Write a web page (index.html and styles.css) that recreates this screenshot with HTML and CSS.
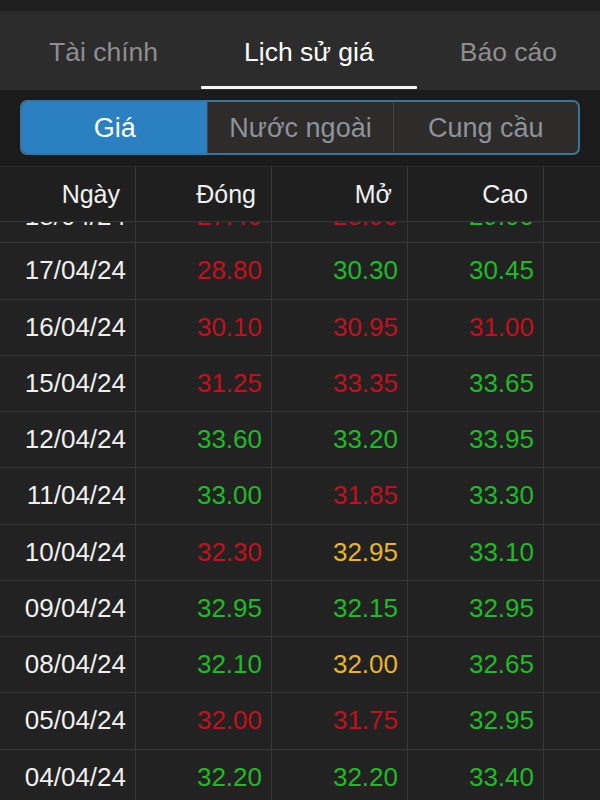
FILE: index.html
```html
<!DOCTYPE html>
<html lang="vi">
<head>
<meta charset="utf-8">
<title>Lịch sử giá</title>
<link rel="stylesheet" href="styles.css">
</head>
<body>
<div class="topstrip"></div>
<nav class="tabs">
  <div class="tab">Tài chính</div>
  <div class="tab active">Lịch sử giá</div>
  <div class="tab">Báo cáo</div>
</nav>
<div class="segwrap">
  <div class="seg">
    <div class="seg-item active">Giá</div>
    <div class="seg-item">Nước ngoài</div>
    <div class="seg-item">Cung cầu</div>
  </div>
</div>
<div class="table">
  <div class="row head">
    <div class="cell">Ngày</div>
    <div class="cell">Đóng</div>
    <div class="cell">Mở</div>
    <div class="cell">Cao</div>
    <div class="cell last"></div>
  </div>
  <div class="body">
    <div class="row partial">
      <div class="cell">18/04/24</div>
      <div class="cell red">27.40</div>
      <div class="cell red">28.90</div>
      <div class="cell green">29.00</div>
      <div class="cell last"></div>
    </div>
    <div class="row"><div class="cell">17/04/24</div><div class="cell red">28.80</div><div class="cell green">30.30</div><div class="cell green">30.45</div><div class="cell last"></div></div>
    <div class="row"><div class="cell">16/04/24</div><div class="cell red">30.10</div><div class="cell red">30.95</div><div class="cell red">31.00</div><div class="cell last"></div></div>
    <div class="row"><div class="cell">15/04/24</div><div class="cell red">31.25</div><div class="cell red">33.35</div><div class="cell green">33.65</div><div class="cell last"></div></div>
    <div class="row"><div class="cell">12/04/24</div><div class="cell green">33.60</div><div class="cell green">33.20</div><div class="cell green">33.95</div><div class="cell last"></div></div>
    <div class="row"><div class="cell">11/04/24</div><div class="cell green">33.00</div><div class="cell red">31.85</div><div class="cell green">33.30</div><div class="cell last"></div></div>
    <div class="row"><div class="cell">10/04/24</div><div class="cell red">32.30</div><div class="cell yellow">32.95</div><div class="cell green">33.10</div><div class="cell last"></div></div>
    <div class="row"><div class="cell">09/04/24</div><div class="cell green">32.95</div><div class="cell green">32.15</div><div class="cell green">32.95</div><div class="cell last"></div></div>
    <div class="row"><div class="cell">08/04/24</div><div class="cell green">32.10</div><div class="cell yellow">32.00</div><div class="cell green">32.65</div><div class="cell last"></div></div>
    <div class="row"><div class="cell">05/04/24</div><div class="cell red">32.00</div><div class="cell red">31.75</div><div class="cell green">32.95</div><div class="cell last"></div></div>
    <div class="row"><div class="cell">04/04/24</div><div class="cell green">32.20</div><div class="cell green">32.20</div><div class="cell green">33.40</div><div class="cell last"></div></div>
  </div>
</div>
</body>
</html>
```
FILE: styles.css
```css
html, body {
  margin: 0;
  padding: 0;
}
body {
  width: 600px;
  height: 800px;
  overflow: hidden;
  background: #1b1b1b;
  font-family: "Liberation Sans", Arial, sans-serif;
  color: #f2f2f2;
}
.topstrip {
  height: 11px;
  background: #1f1f1f;
}
.tabs {
  height: 79px;
  background: #2c2c2c;
  display: flex;
  padding-left: 6px;
}
.tab {
  position: relative;
  display: flex;
  align-items: center;
  padding: 4px 43px 0;
  font-size: 26.5px;
  color: #8e8e8e;
  white-space: nowrap;
}
.tab.active {
  color: #ffffff;
}
.tab.active::after {
  content: "";
  position: absolute;
  left: 0;
  right: 0;
  bottom: 1px;
  height: 3px;
  background: #f4f4f4;
  border-radius: 1px;
}
.segwrap {
  padding: 10px 20px 11px;
  background: #1b1b1b;
}
.seg {
  display: grid;
  grid-template-columns: 1fr 1fr 1fr;
  height: 55px;
  box-sizing: border-box;
  border: 2px solid #37759a;
  border-radius: 7px;
  overflow: hidden;
  background: #2e2b2b;
}
.seg-item {
  display: flex;
  align-items: center;
  justify-content: center;
  padding-top: 1px;
  font-size: 27px;
  color: #8c939b;
  border-left: 1px solid #474343;
}
.seg-item:first-child {
  border-left: none;
}
.seg-item.active {
  background: #2b80c1;
  color: #ffffff;
}
.table {
  border-top: 1px solid #2e2e2e;
}
.row {
  display: grid;
  grid-template-columns: 136px 136px 136px 136px 1fr;
  height: 56.25px;
  box-sizing: border-box;
  border-bottom: 1px solid #383838;
  background: #222222;
}
.row.head {
  height: 55px;
  background: #1f1f1f;
  border-bottom: 1px solid #353535;
}
.cell {
  display: flex;
  align-items: center;
  justify-content: flex-end;
  padding-right: 9px;
  font-size: 26px;
  color: #f0f0f0;
  border-right: 1px solid #383838;
}
.head .cell {
  font-size: 25px;
  padding-right: 15px;
  padding-top: 1px;
}
.cell.last {
  border-right: none;
}
.body {
  height: 578px;
  overflow: hidden;
}
.row.partial {
  margin-top: -35px;
}
.row.partial .cell {
  padding-top: 3px;
}
.green { color: #1fbb26; }
.red { color: #c3101d; }
.yellow { color: #e8b525; }
```
